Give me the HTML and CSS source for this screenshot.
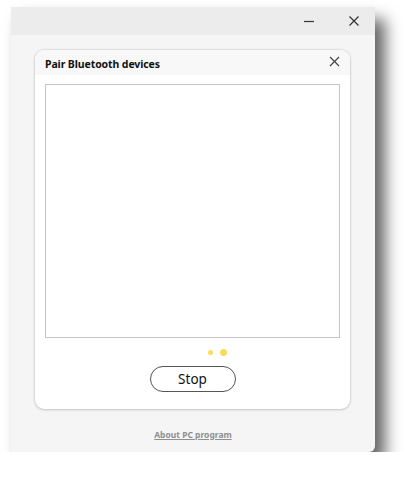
FILE: index.html
```html
<!DOCTYPE html>
<html lang="en">
<head>
<meta charset="UTF-8">
<meta name="viewport" content="width=device-width, initial-scale=1.0">
<title>Pair Bluetooth devices</title>
<link rel="stylesheet" href="styles.css">
</head>
<body>

<div class="window">
    <div class="titlebar">
        <button class="tb-btn" aria-label="Minimize">
            <svg width="12" height="12" viewBox="0 0 12 12"><path d="M1 6.5h10" stroke="#333" stroke-width="1.2"/></svg>
        </button>
        <button class="tb-btn" aria-label="Close">
            <svg width="12" height="12" viewBox="0 0 12 12"><path d="M1.5 1.5l9 9M10.5 1.5l-9 9" stroke="#333" stroke-width="1.2"/></svg>
        </button>
    </div>

    <div class="content">
        <div class="dialog">
            <div class="dialog-head">
                <span class="dialog-title">Pair Bluetooth devices</span>
                <button class="dialog-close" aria-label="Close">
                    <svg width="11" height="11" viewBox="0 0 11 11"><path d="M1 1l9 9M10 1l-9 9" stroke="#444" stroke-width="1.2"/></svg>
                </button>
            </div>
            <div class="device-list"></div>
            <div class="dots">
                <span class="dot small"></span>
                <span class="dot"></span>
            </div>
            <button class="stop-btn">Stop</button>
        </div>

        <a class="about" href="#">About PC program</a>
    </div>
</div>

</body>
</html>
```

FILE: styles.css
```css
body { margin: 0; background: #fff; font-family: 'Noto Sans', 'Open Sans', sans-serif; color: #111; }
.window { width: 364px; height: 445px; margin: 7px 0 0 11px; background: #f5f5f5; border-radius: 0 0 6px 0; box-shadow: 10px 12px 16px rgba(0,0,0,0.62); display: flex; flex-direction: column; }
.titlebar { height: 28px; background: #ececec; display: flex; justify-content: flex-end; align-items: center; padding-right: 14px; gap: 31px; }
.tb-btn { background: none; border: none; padding: 0; width: 14px; height: 14px; display: flex; align-items: center; justify-content: center; cursor: pointer; }
.content { flex: 1; display: flex; flex-direction: column; align-items: flex-start; padding: 15px 0 0 24px; }
.dialog { width: 315px; height: 359px; background: #fff; border-radius: 9px; box-shadow: 0 0 2px rgba(0,0,0,0.25), 0 1px 3px rgba(0,0,0,0.12); display: flex; flex-direction: column; align-items: center; overflow: hidden; }
.dialog-head { align-self: stretch; height: 25px; background: #f8f8f8; display: flex; align-items: center; justify-content: space-between; padding: 3px 10px 0 10px; box-sizing: border-box; }
.dialog-title { font-size: 10.5px; font-weight: 700; letter-spacing: -0.1px; }
.dialog-close { background: none; border: none; padding: 0; width: 12px; height: 12px; display: flex; align-items: center; justify-content: center; margin-top: -5px; }
.device-list { width: 295px; height: 254px; margin-top: 9px; border: 1px solid #c4c4c4; box-sizing: border-box; background: #fff; }
.dots { display: flex; align-items: center; gap: 7px; height: 14px; margin-top: 7px; padding-left: 49px; }
.dot { width: 7px; height: 7px; border-radius: 50%; background: #f7dc5c; }
.dot.small { width: 5px; height: 5px; }
.stop-btn { margin-top: 7px; width: 86px; height: 26px; border: 1.5px solid #555; border-radius: 13px; background: #fff; font-family: inherit; font-size: 13.5px; color: #111; padding: 0; cursor: pointer; }
.about { align-self: center; margin: 20px 0 0 -24px; font-size: 8.5px; font-weight: 700; color: #8f8f8f; text-decoration: underline; }
```
